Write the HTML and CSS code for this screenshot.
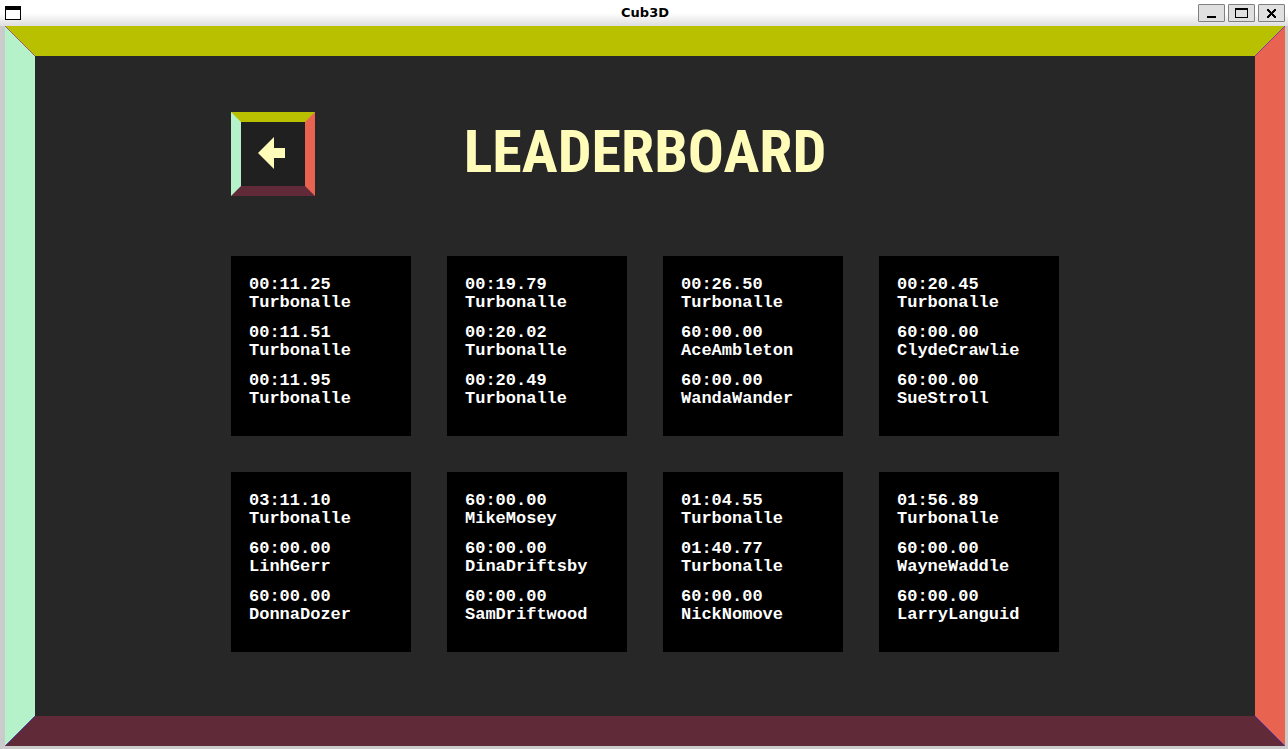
FILE: index.html
```html
<!DOCTYPE html>
<html lang="en">
<head>
<meta charset="utf-8">
<title>Cub3D</title>
<link rel="stylesheet" href="styles.css">
</head>
<body>
<header class="titlebar">
  <svg class="app-icon" width="16" height="14" viewBox="0 0 16 14" shape-rendering="crispEdges" aria-hidden="true"><path fill="#000" d="M0 0h16v14H0z"/><path fill="#fff" d="M1 4h14v9H1z"/></svg>
  <span class="window-title">Cub3D</span>
  <div class="window-controls">
    <button class="control" type="button" aria-label="Minimize"><svg width="25" height="16" viewBox="0 0 25 16" shape-rendering="crispEdges"><path d="M8 11h9v2H8z"/></svg></button>
    <button class="control" type="button" aria-label="Maximize"><svg width="25" height="16" viewBox="0 0 25 16" shape-rendering="crispEdges"><path fill-rule="evenodd" d="M6 3h13v10H6zM7 5v7h11V5z"/></svg></button>
    <button class="control" type="button" aria-label="Close"><svg width="25" height="16" viewBox="0 0 25 16" shape-rendering="crispEdges"><path d="M8 4h2v1h1v1h1v1h1V6h1V5h1V4h2v2h-1v1h-1v1h-1v1h1v1h1v1h1v2h-2v-1h-1v-1h-1v-1h-1v1h-1v1h-1v1H8v-2h1v-1h1V9h1V8h-1V7H9V6H8z"/></svg></button>
  </div>
</header>
<main class="room">
  <svg class="seam seam-tl" viewBox="0 0 30 30" aria-hidden="true"><path d="M0 0l30 30" stroke="#a0607a"/></svg>
  <svg class="seam seam-tr" viewBox="0 0 30 30" aria-hidden="true"><path d="M30 0L0 30" stroke="#8a35b8"/></svg>
  <svg class="seam seam-bl" viewBox="0 0 30 30" aria-hidden="true"><path d="M30 0L0 30" stroke="#4f4aa0"/></svg>
  <svg class="seam seam-br" viewBox="0 0 30 30" aria-hidden="true"><path d="M0 0l30 30" stroke="#5a3aa0"/></svg>
  <div class="board">
    <div class="heading">
      <button class="back" type="button" aria-label="Back"><svg width="28" height="32" viewBox="0 0 28 32"><path fill="#fffbb8" d="M0 16L16 0v11h11v10H16v11z"/></svg></button>
      <h1 class="title">LEADERBOARD</h1>
    </div>
    <div class="levels">
      <ol class="card"><li><time>00:11.25</time><span>Turbonalle</span></li><li><time>00:11.51</time><span>Turbonalle</span></li><li><time>00:11.95</time><span>Turbonalle</span></li></ol>
      <ol class="card"><li><time>00:19.79</time><span>Turbonalle</span></li><li><time>00:20.02</time><span>Turbonalle</span></li><li><time>00:20.49</time><span>Turbonalle</span></li></ol>
      <ol class="card"><li><time>00:26.50</time><span>Turbonalle</span></li><li><time>60:00.00</time><span>AceAmbleton</span></li><li><time>60:00.00</time><span>WandaWander</span></li></ol>
      <ol class="card"><li><time>00:20.45</time><span>Turbonalle</span></li><li><time>60:00.00</time><span>ClydeCrawlie</span></li><li><time>60:00.00</time><span>SueStroll</span></li></ol>
      <ol class="card"><li><time>03:11.10</time><span>Turbonalle</span></li><li><time>60:00.00</time><span>LinhGerr</span></li><li><time>60:00.00</time><span>DonnaDozer</span></li></ol>
      <ol class="card"><li><time>60:00.00</time><span>MikeMosey</span></li><li><time>60:00.00</time><span>DinaDriftsby</span></li><li><time>60:00.00</time><span>SamDriftwood</span></li></ol>
      <ol class="card"><li><time>01:04.55</time><span>Turbonalle</span></li><li><time>01:40.77</time><span>Turbonalle</span></li><li><time>60:00.00</time><span>NickNomove</span></li></ol>
      <ol class="card"><li><time>01:56.89</time><span>Turbonalle</span></li><li><time>60:00.00</time><span>WayneWaddle</span></li><li><time>60:00.00</time><span>LarryLanguid</span></li></ol>
    </div>
  </div>
</main>
</body>
</html>
```
FILE: styles.css
```css
* {
  box-sizing: border-box;
}

body {
  margin: 0;
  min-height: 100vh;
  display: flex;
  flex-direction: column;
  background: #cbcbcb;
  font-family: "Liberation Mono", monospace;
}

.titlebar {
  display: grid;
  grid-template-columns: 1fr auto 1fr;
  align-items: center;
  height: 26px;
  padding: 0 3px 0 5px;
  background: linear-gradient(#fff 50%, #dedede);
}

.app-icon {
  display: block;
}

.window-title {
  font: bold 13px/24px "DejaVu Sans", sans-serif;
  color: #000;
}

.window-controls {
  display: flex;
  justify-content: flex-end;
  gap: 3px;
}

.control {
  display: block;
  padding: 0;
  border: 1px solid #808080;
  border-radius: 1px;
  background: #e0e0e0;
}

.control svg {
  display: block;
}

.room {
  position: relative;
  flex: 1;
  margin: 0 3px 3px 5px;
  padding: 56px 24px;
  border: 30px solid;
  border-color: #b9c000 #e86350 #612a39 #b5f1c9;
  background: #272727;
}

.seam {
  position: absolute;
  width: 30px;
  height: 30px;
}

.seam-tl { top: -30px; left: -30px; }
.seam-tr { top: -30px; right: -30px; }
.seam-bl { bottom: -30px; left: -30px; }
.seam-br { bottom: -30px; right: -30px; }

.board {
  width: fit-content;
  margin: 0 auto;
}

.heading {
  display: grid;
  grid-template-columns: 84px 1fr 84px;
  align-items: center;
  margin-bottom: 60px;
}

.back {
  display: flex;
  align-items: center;
  justify-content: center;
  width: 84px;
  height: 84px;
  padding: 0 2px 2px 0;
  border: 10px solid;
  border-color: #b9c000 #e86350 #612a39 #b5f1c9;
  background: #202020;
}

.title {
  margin: 0;
  padding-bottom: 4px;
  text-align: center;
  font: bold 60px/80px "Roboto Condensed", "Liberation Sans Narrow", "DejaVu Sans Condensed", sans-serif;
  color: #fffbb8;
}

.levels {
  display: grid;
  grid-template-columns: repeat(4, 180px);
  gap: 36px;
}

.card {
  display: flex;
  flex-direction: column;
  gap: 12px;
  min-height: 180px;
  margin: 0;
  padding: 20px 18px;
  list-style: none;
  background: #000;
  color: #fff;
  font-size: 17px;
  font-weight: bold;
  line-height: 18px;
}

.card time,
.card span {
  display: block;
}
```
